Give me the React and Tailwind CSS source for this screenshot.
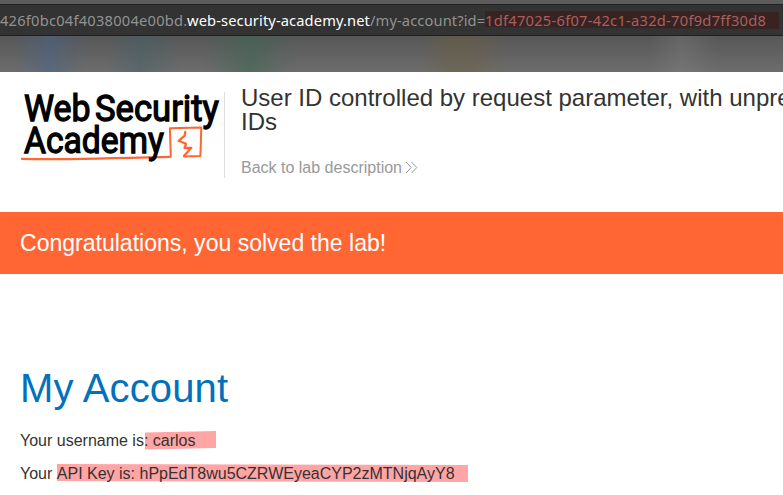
function AddressBar() {
  return (
    <div className="h-9 border-t-4 border-[#5c5c5c] bg-[#333333]">
      <div className="flex h-8 items-center overflow-hidden whitespace-nowrap border-y border-[#1f1f1f] font-['Noto_Sans',sans-serif] text-[14.67px] leading-[18px] text-[#929292]">
        <span className="w-[187px] shrink-0 tracking-[0.23px]">426f0bc04f4038004e00bd.</span>
        <span className="w-[183px] shrink-0 tracking-[0.12px] text-white">web-security-academy.net</span>
        <span className="w-[115px] shrink-0 tracking-[0.12px]">/my-account?id=</span>
        <span className="relative h-[18px] w-[294px] shrink-0 leading-[18px] tracking-[0.27px] text-[#a7605d]">
          <svg className="absolute inset-0" width="294" height="18" viewBox="0 0 294 18">
            <path d="M0 0 L150 0 L294 1 V18 L150 17 L0 16Z" fill="#382323" />
          </svg>
          <span className="relative">1df47025-6f07-42c1-a32d-70f9d7ff30d8</span>
        </span>
      </div>
    </div>
  );
}

function BlurredToolbar() {
  return (
    <div className="h-9 bg-linear-to-b from-[#575757] to-[#6e6d6d]">
      <div className="h-full bg-[linear-gradient(90deg,#46648a00_12px,#46648a30_28px,#46648a80_50px,#46648a30_70px,#46648a00_90px,#42626800_104px,#42626870_140px,#42626800_182px,#3f665500_200px,#3f665530_218px,#3f665590_250px,#3f665530_280px,#3f665500_304px,#6d603c00_420px,#6d603c65_450px,#6d603c65_470px,#6d603c00_508px,#8a8a8a00_650px,#8a8a8a45_682px,#8a8a8a00_718px)]" />
    </div>
  );
}

function AcademyLogo() {
  return (
    <svg className="shrink-0 overflow-visible" width="204" height="86" viewBox="20 92 204 86" role="img" aria-label="Web Security Academy">
      <g fill="none" stroke="#ff6633" strokeLinecap="round" strokeLinejoin="round">
        <path d="M22 158.8 L34 159.2 C70 159.4 120 158 170 156.8" strokeWidth="2.3" />
        <path d="M170.8 156.5 L169.9 128.2 L201.3 127.6 L200.4 156 L184 156.4" strokeWidth="2" />
        <path d="M185.3 132 L184.7 135.7 L178.6 140.8 L186 143.8 L184.5 148 L191.3 147.8 L184 156" strokeWidth="2.3" />
      </g>
      <g fill="#000" stroke="#000" strokeWidth="1.3" fontFamily="Roboto, sans-serif" fontWeight="400" fontSize="36.5">
        <text x="24" y="120.5" textLength="66.5" lengthAdjust="spacingAndGlyphs">Web</text>
        <text x="95" y="120.5" textLength="124" lengthAdjust="spacingAndGlyphs">Security</text>
        <text x="24" y="153" textLength="140" lengthAdjust="spacingAndGlyphs">Academy</text>
      </g>
    </svg>
  );
}

export default function App() {
  return (
    <div className="h-[495px] w-[783px] overflow-hidden bg-white font-['Liberation_Sans',Arial,sans-serif] text-[#333332]">
      <AddressBar />
      <BlurredToolbar />
      <header className="flex h-[140px] pl-5 pt-5">
        <AcademyLogo />
        <div className="h-[86px] w-[560px] shrink-0 border-l border-[#dddddd] pl-4">
          <h2 className="-mt-[6px] whitespace-nowrap text-[24px] leading-6">
            User ID controlled by request parameter, with unpredictable user
            <br />
            IDs
          </h2>
          <a className="mt-[25px] flex items-center text-[16px] leading-[18px] text-[#999999]">
            Back to lab description
            <svg className="ml-[3px]" width="13" height="14" viewBox="0 0 13 14" fill="none" stroke="#999999">
              <path d="M1 1 L6.3 6.5 L1 12 M6.5 1 L11.8 6.5 L6.5 12" />
            </svg>
          </a>
        </div>
      </header>
      <section className="flex h-[62px] items-center bg-[#ff6633] pl-5">
        <p className="text-[23.04px] leading-6 text-white">Congratulations, you solved the lab!</p>
      </section>
      <main className="pl-5 pt-[91px]">
        <h1 className="text-[40px] leading-[46px] tracking-[0.15px] text-[#0071bc]">My Account</h1>
        <p className="mt-[21px] flex h-[18px] text-[16px] leading-[18px]">
          <span>Your username is</span>
          <span className="relative">
            <svg className="absolute -top-px left-px" width="72" height="19" viewBox="0 0 72 19">
              <path d="M0 1.5 L71 0 L71 17 L0 18.5Z" fill="#ffa5a5" />
            </svg>
            <span className="relative">: carlos</span>
          </span>
        </p>
        <p className="mt-[15px] flex h-[18px] text-[16px] leading-[18px]">
          <span className="whitespace-pre">Your </span>
          <span className="relative">
            <svg className="absolute -top-px left-0" width="412" height="19" viewBox="0 0 412 19">
              <path d="M0 0 L411 1 V18 L0 17Z" fill="#ffa5a5" />
            </svg>
            <span className="relative">API Key is: hPpEdT8wu5CZRWEyeaCYP2zMTNjqAyY8</span>
          </span>
        </p>
      </main>
    </div>
  );
}
